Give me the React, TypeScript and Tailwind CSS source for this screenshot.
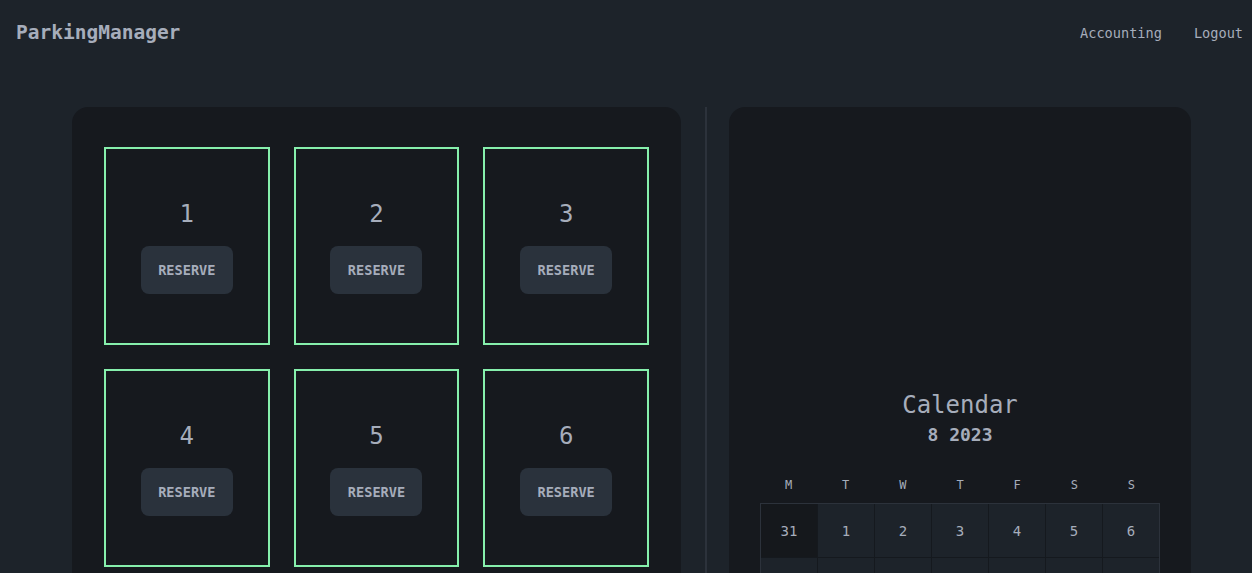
import React from 'react'

const spots = [1, 2, 3, 4, 5, 6]
const days = ['M', 'T', 'W', 'T', 'F', 'S', 'S']

// august 2023, week starts monday
const cells: { d: number; other: boolean }[] = [
  { d: 31, other: true },
  ...Array.from({ length: 31 }, (_, i) => ({ d: i + 1, other: false })),
  { d: 1, other: true },
  { d: 2, other: true },
  { d: 3, other: true },
]

export default function App() {
  return (
    <div className="min-h-screen bg-[#1d232a] text-[#a6adbb] font-['DejaVu_Sans_Mono',monospace]">
      {/* navbar */}
      <div className="flex items-center justify-between h-[66px] pl-4 pr-[9px]">
        <span className="text-[19.5px] font-bold">ParkingManager</span>
        <div className="flex items-center gap-[32px] text-[13.6px]">
          <span>Accounting</span>
          <span>Logout</span>
        </div>
      </div>

      {/* main */}
      <div className="flex items-start pl-[72px] pt-[41px]">
        {/* parking spots */}
        <div className="w-[609px] rounded-2xl bg-[#16191e] px-8 pt-10 pb-10">
          <div className="grid grid-cols-3 gap-x-6 gap-y-[24px]">
            {spots.map((n) => (
              <div key={n} className="h-[198px] border-2 border-[#86efac] flex flex-col items-center pt-[49px]">
                <div className="text-2xl leading-8 mb-4">{n}</div>
                <button className="w-[92px] h-12 rounded-lg bg-[#2a323c] text-[13.6px] font-bold uppercase">Reserve</button>
              </div>
            ))}
          </div>
        </div>

        {/* divider */}
        <div className="w-[2px] self-stretch bg-[#2c323b] ml-6 mr-[22px]" />

        {/* calendar */}
        <div className="w-[462px] rounded-2xl bg-[#16191e] px-[31px] pt-[282px] pb-10">
          <div className="text-center text-2xl leading-8">Calendar</div>
          <div className="text-center text-lg leading-7 font-bold">8 2023</div>
          <div className="grid grid-cols-7 mt-7 mb-[10px]">
            {days.map((d, i) => (
              <div key={i} className="text-center text-xs leading-4">{d}</div>
            ))}
          </div>
          <div className="grid grid-cols-7 gap-px bg-[#15191e] border border-[#2c323b]">
            {cells.map((c, i) => (
              <div
                key={i}
                className={`h-[53px] flex items-center justify-center text-sm ${c.other ? 'bg-[#15181c]' : 'bg-[#1d232a]'}`}
              >
                {c.d}
              </div>
            ))}
          </div>
        </div>
      </div>
    </div>
  )
}
